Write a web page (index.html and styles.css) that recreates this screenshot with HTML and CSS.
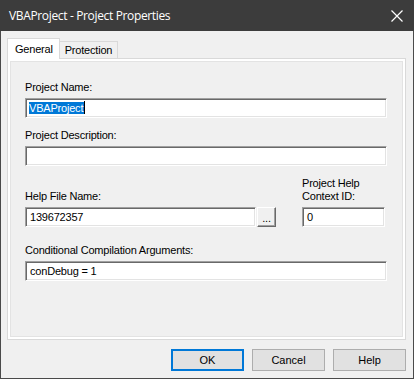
FILE: index.html
```html
<!DOCTYPE html>
<html lang="en">
<head>
  <meta charset="UTF-8">
  <title>VBAProject - Project Properties</title>
  <link rel="stylesheet" href="styles.css">
</head>
<body>
<div class="window">
  <div class="titlebar">
    <span class="title">VBAProject - Project Properties</span>
    <svg class="close" width="12" height="12" viewBox="0 0 12 12">
      <path d="M0.5 0.5 L11.5 11.5 M11.5 0.5 L0.5 11.5" stroke="#fff" stroke-width="1.2" fill="none"/>
    </svg>
  </div>
  <div class="content">
    <div class="tabs">
      <div class="tab selected">General</div>
      <div class="tab">Protection</div>
    </div>
    <div class="panel">
      <div class="panel-inner">
        <label class="field-label first">Project Name:</label>
        <div class="textbox"><span class="sel">VBAProject</span><span class="caret"></span></div>

        <label class="field-label">Project Description:</label>
        <div class="textbox"></div>

        <div class="help-row">
          <div class="help-file">
            <label class="field-label">Help File Name:</label>
            <div class="file-row">
              <div class="textbox wide">139672357</div>
              <div class="dots">...</div>
            </div>
          </div>
          <div class="help-id">
            <label class="field-label">Project Help<br>Context ID:</label>
            <div class="textbox">0</div>
          </div>
        </div>

        <label class="field-label cond">Conditional Compilation Arguments:</label>
        <div class="textbox">conDebug = 1</div>
      </div>
    </div>
    <div class="buttons">
      <button type="button" class="btn default">OK</button>
      <button type="button" class="btn">Cancel</button>
      <button type="button" class="btn">Help</button>
    </div>
  </div>
</div>
</body>
</html>
```

FILE: styles.css
```css
* {
  box-sizing: border-box;
}
body {
  margin: 0;
  background: #f0f0f0;
  font-family: "Liberation Sans", Arial, sans-serif;
  font-size: 11px;
  letter-spacing: -0.2px;
  color: #000;
}
.window {
  width: 414px;
  height: 379px;
  border: 1px solid #4a4a4a;
  border-top: none;
  background: #f0f0f0;
  display: flex;
  flex-direction: column;
}
.titlebar {
  height: 31px;
  margin: 0 -1px;
  background: #3c3c3c;
  display: flex;
  align-items: center;
  justify-content: space-between;
  padding: 0 11px 0 9px;
}
.title {
  color: #fff;
  font-family: "Open Sans", sans-serif;
  font-size: 12px;
  letter-spacing: -0.35px;
}
.content {
  flex: 1;
  padding: 7px 7px 0 6px;
}
.tabs {
  display: flex;
  align-items: flex-end;
  height: 20px;
  position: relative;
  z-index: 1;
}
.tab {
  height: 17px;
  padding: 1px 5px 0 5px;
  border: 1px solid #d9d9d9;
  border-bottom: none;
  background: #f0f0f0;
  line-height: 14px;
}
.tab.selected {
  height: 21px;
  padding: 3px 6px 0 7px;
  background: #fff;
  margin-bottom: -1px;
}
.tab + .tab {
  border-left: none;
}
.panel {
  height: 282px;
  border: 1px solid #d9d9d9;
  background: #fff;
  padding: 2px;
}
.panel-inner {
  height: 100%;
  border: 1px solid #e3e3e3;
  background: #f0f0f0;
  padding: 0 15px 0 14px;
}
.field-label {
  display: block;
  line-height: 13px;
  margin: 11px 0 4px;
}
.field-label.first {
  margin-top: 19px;
}
.field-label.cond {
  margin-top: 17px;
}
.textbox {
  height: 20px;
  background: #fff;
  border-top: 1px solid #a0a0a0;
  border-left: 1px solid #a0a0a0;
  border-right: 1px solid #fff;
  border-bottom: 1px solid #fff;
  box-shadow: inset 1px 1px 0 #696969, inset -1px -1px 0 #e3e3e3;
  padding: 2px 4px;
  line-height: 15px;
  white-space: nowrap;
}
.sel {
  background: #0078d7;
  color: #fff;
  padding: 0 1px 0 0;
  margin-left: -1px;
}
.caret {
  display: inline-block;
  width: 1px;
  height: 13px;
  background: #000;
  vertical-align: -2px;
}
.help-row {
  display: flex;
  align-items: flex-end;
  margin-top: 11px;
}
.help-file {
  width: 251px;
}
.help-row .field-label {
  margin-top: 0;
}
.file-row {
  display: flex;
  align-items: flex-start;
}
.textbox.wide {
  width: 232px;
}
.dots {
  width: 19px;
  height: 20px;
  margin-left: 1px;
  background: #f0f0f0;
  border-top: 1px solid #fff;
  border-left: 1px solid #fff;
  border-right: 1px solid #696969;
  border-bottom: 1px solid #696969;
  box-shadow: inset -1px -1px 0 #a0a0a0;
  text-align: center;
  line-height: 20px;
  font-size: 11px;
}
.help-id {
  margin-left: 26px;
  flex: 1;
}
.help-id .textbox {
  width: 83px;
}
.buttons {
  display: flex;
  justify-content: flex-end;
  gap: 8px;
  margin-top: 9px;
}
.btn {
  width: 73px;
  height: 22px;
  background: #e1e1e1;
  border: 1px solid #adadad;
  font-family: "Liberation Sans", Arial, sans-serif;
  font-size: 11px;
  color: #000;
  padding: 0;
}
.btn.default {
  border: 2px solid #0078d7;
}
```
